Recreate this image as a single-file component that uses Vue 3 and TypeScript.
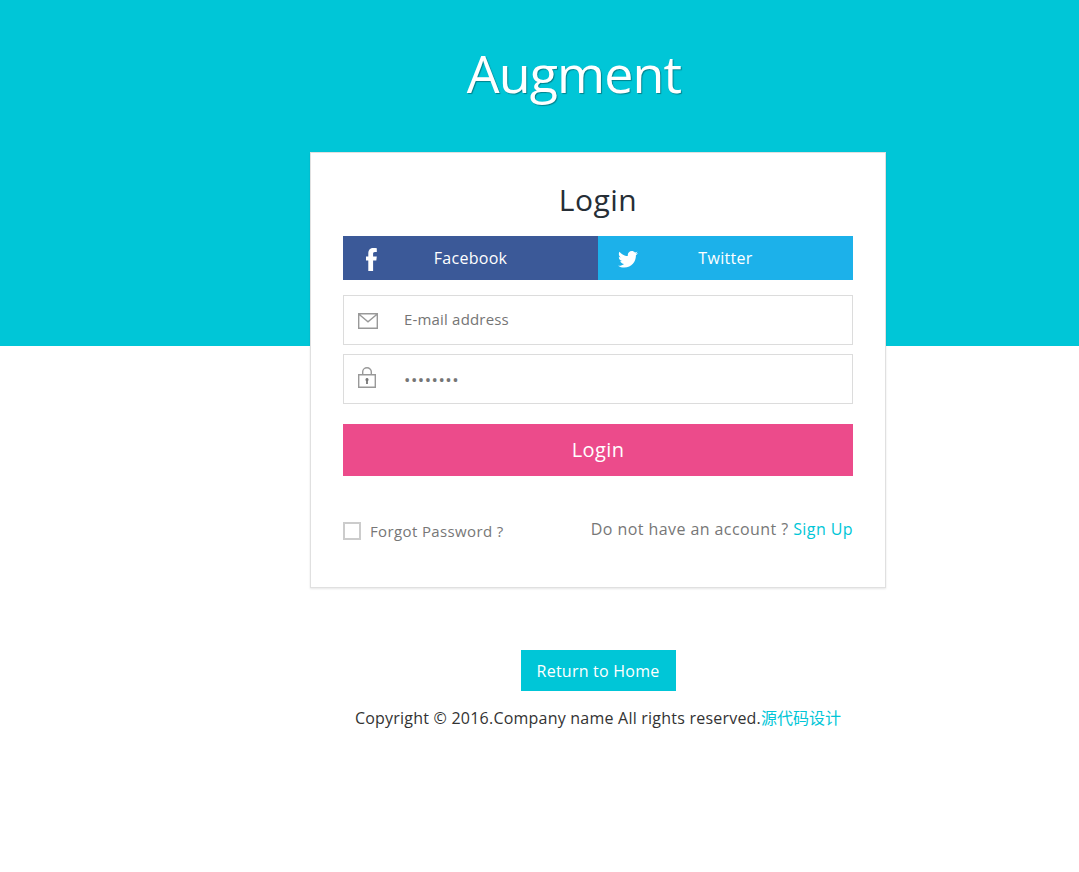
<script setup lang="ts">
const title: string = 'Augment'
</script>

<template>
  <div class="page">
    <h1 class="brand">{{ title }}</h1>
    <div class="card">
      <h2 class="card-title">Login</h2>
      <div class="socials">
        <a class="social fb">
          <svg class="fb-icon" viewBox="0 0 11 23" width="11" height="23"><path fill="#fff" d="M2.300 23V12.500H0V8.400h2.300V5.500C2.300 1.800 4.300 0 7.400 0c1.400 0 2.600.1 3.400.2v3.700H8.900c-1.400 0-1.800.7-1.800 1.800v2.700h3.700l-.5 4.100H7.100V23z"/></svg>
          <span>Facebook</span>
        </a>
        <a class="social tw">
          <svg class="tw-icon" viewBox="0 0 24 20" width="20" height="17" preserveAspectRatio="none"><path fill="#fff" d="M24 2.400c-.9.400-1.800.700-2.800.800 1-.6 1.800-1.600 2.200-2.700-1 .6-2 1-3.100 1.200C19.300.7 18 0 16.600 0c-2.700 0-4.900 2.200-4.900 4.900 0 .4 0 .8.100 1.100C7.700 5.800 4.100 3.900 1.700.9c-.4.700-.7 1.600-.7 2.500 0 1.700.9 3.200 2.200 4.100-.8 0-1.600-.2-2.200-.6v.1c0 2.400 1.700 4.400 3.900 4.800-.4.100-.8.200-1.300.2-.3 0-.6 0-.9-.1.600 2 2.400 3.400 4.600 3.400-1.700 1.300-3.800 2.100-6.100 2.100-.4 0-.8 0-1.200-.1 2.200 1.400 4.800 2.200 7.500 2.200 9.100 0 14-7.500 14-14v-.6c1-.7 1.800-1.600 2.500-2.500z"/></svg>
          <span>Twitter</span>
        </a>
      </div>
      <div class="field first">
        <svg class="mail" viewBox="0 0 20 16" width="20" height="16"><path fill="none" stroke="#999" stroke-width="1.400" d="M.7.7h18.600v14.600H.7zM.7 1l9.300 7.800L19.300 1"/></svg>
        <span class="ph">E-mail address</span>
      </div>
      <div class="field">
        <svg class="lock" viewBox="0 0 18 21" width="18" height="21"><path fill="none" stroke="#999" stroke-width="1.400" d="M.7 7.700h16.600v12.600H.7zM4.700 7.700V4.800a4.300 4.100 0 0 1 8.600 0v2.900"/><path fill="#777" d="M9 11a1.600 1.600 0 0 1 .9 2.900V17H8.100v-3.100A1.600 1.600 0 0 1 9 11z"/></svg>
        <span class="dots">••••••••</span>
      </div>
      <button class="submit" type="button">Login</button>
      <div class="meta">
        <label class="remember"><i class="box"></i><span>Forgot Password ?</span></label>
        <p class="signup">Do not have an account ? <a>Sign Up</a></p>
      </div>
    </div>
    <div class="footer">
      <a class="home">Return to Home</a>
      <p class="copy">Copyright © 2016.Company name All rights reserved.<a>源代码设计</a></p>
    </div>
  </div>
</template>

<style scoped>
.page {
  height: 872px;
  box-sizing: border-box;
  padding-top: 38px;
  background: linear-gradient(#00c6d7 346px, #fff 346px);
  font-family: "Open Sans", "Noto Sans CJK SC", sans-serif;
  overflow: hidden;
}
.brand {
  width: 528px;
  margin: 0 0 0 310px;
  height: 114px;
  font-size: 52px;
  line-height: 70px;
  font-weight: 400;
  letter-spacing: -0.9px;
  text-align: center;
  color: #fff;
  text-shadow: 1px 1px 1px rgba(0, 0, 0, 0.35);
}
.card {
  width: 576px;
  height: 436px;
  box-sizing: border-box;
  margin-left: 310px;
  padding: 0 32px;
  background: #fff;
  border: 1px solid #e0e0e0;
  box-shadow: 0 1px 2px rgba(0, 0, 0, 0.1);
}
.card-title {
  margin: 0;
  height: 83px;
  padding-top: 26px;
  box-sizing: border-box;
  font-size: 30px;
  line-height: 42px;
  font-weight: 400;
  letter-spacing: 0.5px;
  text-align: center;
  color: #262e36;
}
.socials {
  display: flex;
  height: 44px;
}
.social {
  flex: 1;
  position: relative;
  display: flex;
  align-items: center;
  justify-content: center;
  color: #fff;
  font-size: 16px;
  letter-spacing: 0.3px;
}
.fb { background: #3b5998; }
.tw { background: #1cb1ea; }
.fb-icon {
  position: absolute;
  left: 23px;
  top: 12px;
}
.tw-icon {
  position: absolute;
  left: 20px;
  top: 15px;
}
.field {
  position: relative;
  height: 50px;
  box-sizing: border-box;
  margin-top: 9px;
  padding-left: 60px;
  display: flex;
  align-items: center;
  border: 1px solid #dcdcdc;
  background: #fff;
}
.field.first { margin-top: 15px; }
.mail {
  position: absolute;
  left: 14px;
  top: 17px;
}
.lock {
  position: absolute;
  left: 14px;
  top: 12px;
}
.ph {
  position: relative;
  top: -1px;
  font-size: 15px;
  letter-spacing: 0.18px;
  color: #757575;
}
.dots {
  font-size: 17px;
  letter-spacing: 0.5px;
  color: #757575;
}
.submit {
  display: block;
  width: 100%;
  height: 52px;
  margin-top: 20px;
  padding: 0 0 2px;
  border: none;
  background: #ec4b8b;
  color: #fff;
  font-family: inherit;
  font-size: 20px;
  letter-spacing: 0.4px;
}
.meta {
  display: flex;
  justify-content: space-between;
  align-items: flex-start;
  margin-top: 42px;
}
.remember {
  display: flex;
  align-items: center;
  margin-top: 3px;
  font-size: 15px;
  letter-spacing: 0.37px;
  color: #777;
}
.box {
  width: 12px;
  height: 12px;
  margin-right: 9px;
  border: 2px solid #ccc;
  display: block;
  padding: 1px;
}
.signup {
  margin: 0;
  font-size: 16px;
  line-height: 22px;
  letter-spacing: 0.42px;
  color: #777;
}
.signup a { color: #00c6d7; }
.footer {
  display: flex;
  flex-direction: column;
  align-items: center;
  width: 576px;
  margin: 62px 0 0 310px;
}
.home {
  width: 155px;
  height: 41px;
  line-height: 43px;
  text-align: center;
  background: #00c6d7;
  color: #fff;
  font-size: 16px;
  letter-spacing: 0.23px;
}
.copy {
  margin: 16px 0 0;
  font-size: 16px;
  line-height: 22px;
  letter-spacing: 0.22px;
  color: #333;
  white-space: nowrap;
}
.copy a {
  color: #00c6d7;
  letter-spacing: 0;
}
</style>
